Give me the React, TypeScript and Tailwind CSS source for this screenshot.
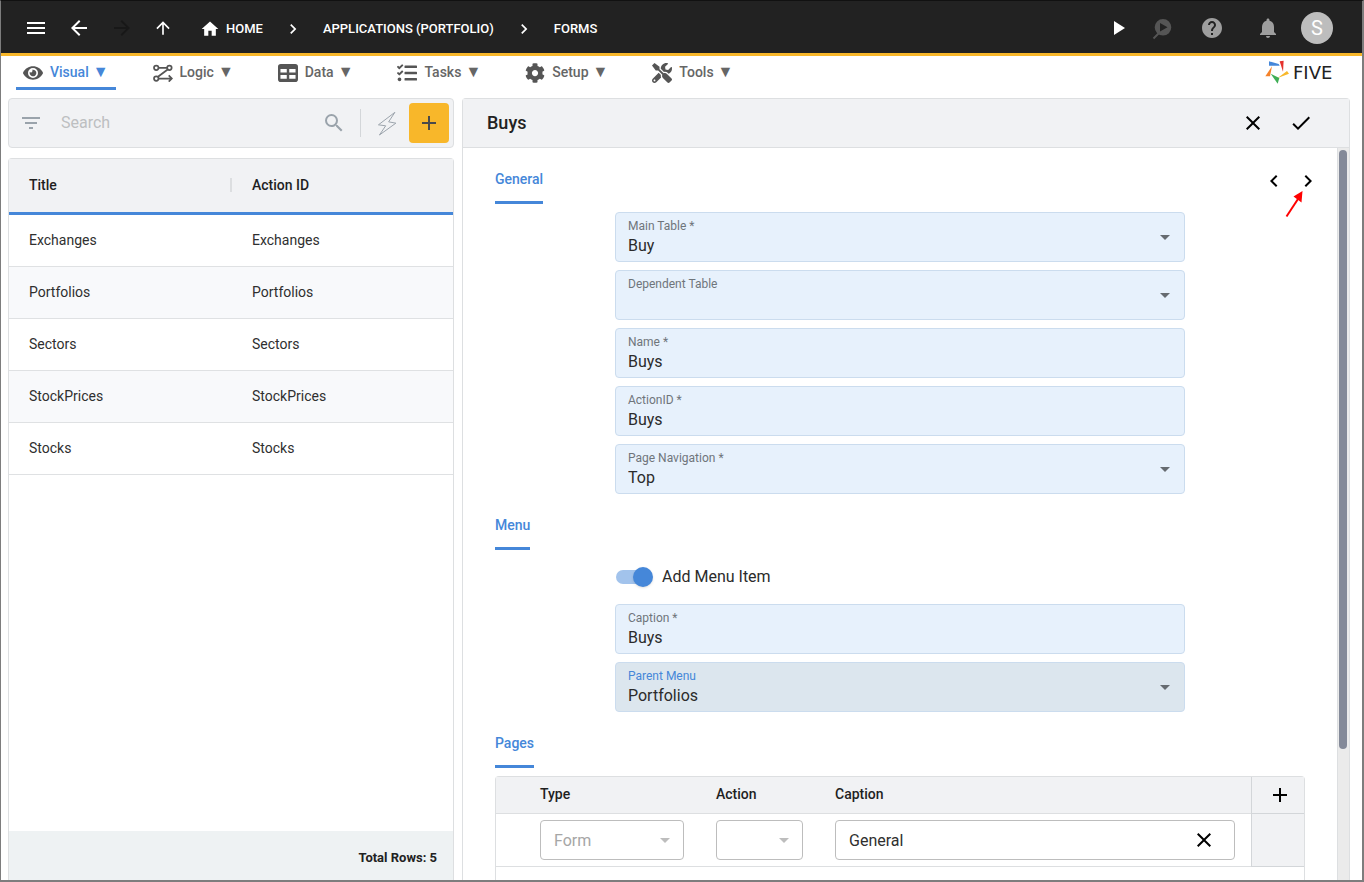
import React from 'react';
import {
  MdAdd,
  MdArrowBack,
  MdArrowDropDown,
  MdArrowForward,
  MdArrowUpward,
  MdCheck,
  MdChevronLeft,
  MdChevronRight,
  MdClose,
  MdFilterList,
  MdHelp,
  MdHome,
  MdMenu,
  MdNotifications,
  MdPlayArrow,
  MdSearch,
} from 'react-icons/md';
import { FaCog, FaEye, FaTasks, FaTools } from 'react-icons/fa';

interface FormAction {
  title: string;
  actionId: string;
}

interface FieldProps {
  id: string;
  label: string;
  value: string;
  select?: boolean;
  active?: boolean;
}

const forms: FormAction[] = [
  { title: 'Exchanges', actionId: 'Exchanges' },
  { title: 'Portfolios', actionId: 'Portfolios' },
  { title: 'Sectors', actionId: 'Sectors' },
  { title: 'StockPrices', actionId: 'StockPrices' },
  { title: 'Stocks', actionId: 'Stocks' },
];

const LogicIcon = () => (
  <svg viewBox="0 0 57 52" className="w-5 h-[18px]" fill="none" stroke="currentColor" strokeWidth="5">
    <circle cx="9" cy="11" r="6.5" />
    <circle cx="47" cy="11" r="6.5" />
    <circle cx="9" cy="42" r="6.5" />
    <path d="M16 11H40M42 16L14 37M16 42H53M45 33l9 9-9 9" />
  </svg>
);

const DataIcon = () => (
  <svg viewBox="0 0 57 51" className="w-5 h-[18px]" fill="currentColor" fillRule="evenodd">
    <path d="M8 0h41a8 8 0 0 1 8 8v35a8 8 0 0 1-8 8H8a8 8 0 0 1-8-8V8a8 8 0 0 1 8-8zM7 14v10h18V14zM32 14v10h18V14zM7 31v11h18V31zM32 31v11h18V31z" />
  </svg>
);

const InspectIcon = () => (
  <svg viewBox="0 0 24 24" className="size-6">
    <path d="M9 17L3.500 22.500" stroke="currentColor" strokeWidth="2" />
    <path
      fill="currentColor"
      fillRule="evenodd"
      d="M13 3a8.300 8.300 0 1 0 0 16.600A8.300 8.300 0 0 0 13 3zM10 7l7.500 4.300L10 15.600z"
    />
  </svg>
);

const BoltIcon = () => (
  <svg viewBox="0 0 60 76" className="w-5 h-[25px]" fill="none" stroke="currentColor" strokeWidth="3" strokeLinejoin="round">
    <path d="M54 4L4 42l22 3L7 73l50-36-22-4z" />
  </svg>
);

const FiveLogo = () => (
  <div className="flex items-center w-[87px] h-6">
    <svg viewBox="0 0 72 70" className="w-6 h-6 shrink-0">
      <path fill="#4587d9" d="M12 3l29 8 3 5H12z" />
      <path fill="#e5322d" d="M44 3l12-2-2 33z" />
      <path fill="#f8b72a" d="M38 53l28-21 6 8z" />
      <path fill="#3fae55" d="M17 40l26 13-5 17z" />
      <path fill="#f5822a" d="M21 18l-6 30H1z" />
    </svg>
    <span className="ml-1 pt-0.5 text-lg leading-6 text-[#222222] font-['DejaVu_Sans',sans-serif]">FIVE</span>
  </div>
);

const tabs = [
  { name: 'Visual', icon: <FaEye className="size-5" /> },
  { name: 'Logic', icon: <LogicIcon /> },
  { name: 'Data', icon: <DataIcon /> },
  { name: 'Tasks', icon: <FaTasks className="size-5" /> },
  { name: 'Setup', icon: <FaCog className="size-5" /> },
  { name: 'Tools', icon: <FaTools className="size-5" /> },
];

const Field: React.FC<FieldProps> = ({ id, label, value, select, active }) => (
  <div
    className={`relative h-[50px] rounded border border-[#cbdcee] px-3 pt-[5px] ${
      active ? 'bg-[#dce6ee]' : 'bg-[#e7f1fc]'
    }`}
  >
    <label htmlFor={id} className={`block text-xs leading-4 ${active ? 'text-[#4587d9]' : 'text-[#6f757b]'}`}>
      {label}
    </label>
    {select ? (
      <>
        <select
          id={id}
          defaultValue={value}
          className="block w-full h-6 appearance-none bg-transparent text-base leading-6 text-[#2b2b2b] outline-none"
        >
          <option value={value}>{value}</option>
        </select>
        <MdArrowDropDown className="absolute right-[7px] top-3 size-6 text-[#666b70] pointer-events-none" />
      </>
    ) : (
      <input
        id={id}
        defaultValue={value}
        className="block w-full h-6 bg-transparent text-base leading-6 text-[#2b2b2b] outline-none"
      />
    )}
  </div>
);

const SectionTitle: React.FC<{ children: React.ReactNode }> = ({ children }) => (
  <h3 className="w-fit border-b-3 border-[#4587d9] pb-3 text-sm leading-5 font-medium text-[#4587d9]">{children}</h3>
);

const TopBar = () => (
  <header className="flex shrink-0 items-center h-[55px] border-b-3 border-[#f8b72a] bg-[#222222] pt-0.5 pl-[23px] pr-[29px] text-white">
    <div className="flex items-center gap-[19px]">
      <button aria-label="Menu"><MdMenu className="size-6" /></button>
      <button aria-label="Back"><MdArrowBack className="size-6" /></button>
      <button aria-label="Forward" className="text-[#181818]"><MdArrowForward className="size-6" /></button>
      <button aria-label="Up"><MdArrowUpward className="size-5" /></button>
    </div>
    <nav className="flex items-center ml-[27px] pt-px text-[13px] leading-5 font-medium">
      <a href="#home" className="flex items-center gap-1.5"><MdHome className="size-5" />HOME</a>
      <MdChevronRight className="size-5 mx-5" />
      <a href="#applications">APPLICATIONS (PORTFOLIO)</a>
      <MdChevronRight className="size-5 mx-5" />
      <a href="#forms">FORMS</a>
    </nav>
    <div className="flex items-center ml-auto">
      <button aria-label="Run" className="flex justify-center w-10"><MdPlayArrow className="size-6" /></button>
      <button aria-label="Inspect" className="flex justify-center w-12 text-[#555555]"><InspectIcon /></button>
      <button aria-label="Help" className="flex justify-center w-[52px] text-[#9e9e9e]"><MdHelp className="size-6" /></button>
      <button aria-label="Notifications" className="flex justify-center w-[60px] text-[#9e9e9e]"><MdNotifications className="size-6" /></button>
      <button className="ml-[3px] size-8 rounded-full bg-[#bdbdbd] text-xl leading-8 text-white">S</button>
    </div>
  </header>
);

const NavTabs = () => (
  <div className="flex shrink-0 items-start justify-between h-[42px] pl-[15px] pr-[10px]">
    <nav className="flex gap-[30px]">
      {tabs.map((tab, index) => (
        <button
          key={tab.name}
          className={`flex items-center h-[34px] border-b-3 px-[7px] text-sm font-medium ${
            index === 0 ? 'border-[#4587d9] text-[#4587d9]' : 'border-transparent text-[#666666]'
          }`}
        >
          <span className="w-5 mt-0.5 text-[#555555]">{tab.icon}</span>
          <span className="ml-[7px] mr-1">{tab.name}</span>
          <span className="text-base leading-5">▼</span>
        </button>
      ))}
    </nav>
    <div className="pt-1">
      <FiveLogo />
    </div>
  </div>
);

const FormList = () => (
  <aside className="flex flex-col shrink-0 w-[446px] gap-2.5">
    <div className="flex items-center h-[50px] rounded border border-[#dddfe1] bg-[#f1f2f4] pl-2.5 pr-1 text-[#9aa3ab]">
      <button aria-label="Filter"><MdFilterList className="size-6" /></button>
      <input
        aria-label="Search"
        placeholder="Search"
        className="flex-1 min-w-0 ml-[18px] bg-transparent text-base text-[#2b2b2b] placeholder:text-[#bdbfc1] outline-none"
      />
      <button aria-label="Find"><MdSearch className="size-6" /></button>
      <span className="w-px h-7 ml-3.5 mr-4 bg-[#d3d6d9]" />
      <button aria-label="Quick actions"><BoltIcon /></button>
      <button aria-label="Add form" className="flex items-center justify-center size-10 ml-3 rounded bg-[#f8b72a] text-[#4a4a4a]">
        <MdAdd className="size-6" />
      </button>
    </div>
    <div className="flex flex-col flex-1 min-h-0 rounded-t border border-b-0 border-[#dddfe1]">
      <table className="w-full table-fixed border-separate border-spacing-0 text-left text-sm text-[#2f2f2f]">
        <colgroup>
          <col className="w-[223px]" />
          <col />
        </colgroup>
        <thead>
          <tr className="h-14">
            <th className="border-b-3 border-[#4587d9] bg-[#f1f2f4] pl-5 pb-0.5 font-medium text-[#1f1f1f]">
              <div className="flex items-center justify-between">
                Title
                <span className="w-0.5 h-3.5 bg-[#dcdee0]" />
              </div>
            </th>
            <th className="border-b-3 border-[#4587d9] bg-[#f1f2f4] pl-5 pb-0.5 font-medium text-[#1f1f1f]">Action ID</th>
          </tr>
        </thead>
        <tbody>
          {forms.map(form => (
            <tr key={form.title} className="h-[52px] even:bg-[#f8f9fb]">
              <td className="border-b border-[#dfe1e3] pl-5 pb-0.5">{form.title}</td>
              <td className="border-b border-[#dfe1e3] pl-5 pb-0.5">{form.actionId}</td>
            </tr>
          ))}
        </tbody>
      </table>
      <div className="flex items-center justify-end h-[49px] pt-1 mt-auto bg-[#eef2f3] pr-4 text-[13px] font-bold text-[#222222]">
        Total Rows: 5
      </div>
    </div>
  </aside>
);

const PagesTable = () => (
  <table className="w-full table-fixed border-separate border-spacing-0 border border-b-0 border-[#dddfe1] rounded-t text-left">
    <colgroup>
      <col className="w-[204px]" />
      <col className="w-[119px]" />
      <col />
      <col className="w-[53px]" />
    </colgroup>
    <thead className="bg-[#f1f2f4] text-sm text-[#1f1f1f]">
      <tr className="h-[37px]">
        <th className="border-b border-[#dddfe1] pl-11 pb-0.5 font-medium">Type</th>
        <th className="border-b border-[#dddfe1] pl-4 pb-0.5 font-medium">Action</th>
        <th className="border-b border-[#dddfe1] pl-4 pb-0.5 font-medium">Caption</th>
        <th className="border-b border-l border-[#d3d6d9] pl-1">
          <button aria-label="Add page" className="block mx-auto text-black"><MdAdd className="size-6" /></button>
        </th>
      </tr>
    </thead>
    <tbody>
      <tr className="h-[53px]">
        <td className="border-b border-[#dddfe1] pl-11 pr-4">
          <div className="relative">
            <select
              aria-label="Type"
              disabled
              className="block w-full h-10 appearance-none rounded border border-[#bdbdbd] pl-[13px] pt-px text-base text-[#a6a6a6] opacity-100"
            >
              <option>Form</option>
            </select>
            <MdArrowDropDown className="absolute right-[7px] top-2 size-6 text-[#bdbdbd]" />
          </div>
        </td>
        <td className="border-b border-[#dddfe1] px-4">
          <div className="relative">
            <select
              aria-label="Action"
              disabled
              className="block w-full h-10 appearance-none rounded border border-[#bdbdbd] opacity-100"
            >
              <option></option>
            </select>
            <MdArrowDropDown className="absolute right-[7px] top-2 size-6 text-[#bdbdbd]" />
          </div>
        </td>
        <td className="border-b border-[#dddfe1] px-4">
          <div className="flex items-center h-10 rounded border border-[#bdbdbd] pl-[13px] pr-[18px]">
            <input aria-label="Caption" defaultValue="General" className="flex-1 min-w-0 pt-0.5 text-base text-[#2f2f2f] outline-none" />
            <button aria-label="Clear caption" className="text-black"><MdClose className="size-6" /></button>
          </div>
        </td>
        <td className="border-b border-l border-[#d3d6d9] bg-[#f1f2f4]"></td>
      </tr>
      <tr className="h-[52px]">
        <td colSpan={4}></td>
      </tr>
    </tbody>
  </table>
);

const FormEditor = () => (
  <main className="flex flex-col flex-1 min-w-0 rounded-t border border-b-0 border-[#dddfe1]">
    <div className="flex shrink-0 items-center h-[49px] border-b border-[#dddfe1] bg-[#f1f2f4] pl-6 pr-9">
      <h2 className="mr-auto text-lg font-medium text-[#222222]">Buys</h2>
      <button aria-label="Cancel" className="text-black"><MdClose className="size-6" /></button>
      <button aria-label="Save" className="ml-6 text-black"><MdCheck className="size-6" /></button>
    </div>
    <div className="flex flex-1 min-h-0">
      <div className="flex-1 min-w-0 overflow-hidden px-8">
        <section className="pt-[21px]">
          <div className="relative flex items-start justify-between mb-2 -mr-[15px]">
            <SectionTitle>General</SectionTitle>
            <div className="flex gap-2.5 text-black">
              <button aria-label="Previous record"><MdChevronLeft className="size-6" /></button>
              <button aria-label="Next record"><MdChevronRight className="size-6" /></button>
            </div>
            <svg viewBox="0 0 20 28" className="absolute right-[15px] top-[21px] w-5 h-7">
              <path d="M1.500 26.500L13 9" stroke="#ff0000" strokeWidth="2" />
              <path d="M17.500 1L16.500 12.500 8.500 6.500z" fill="#ff0000" />
            </svg>
          </div>
          <div className="flex flex-col gap-2 max-w-[570px] mx-auto">
            <Field id="main-table" label="Main Table *" value="Buy" select />
            <Field id="dependent-table" label="Dependent Table" value="" select />
            <Field id="name" label="Name *" value="Buys" />
            <Field id="action-id" label="ActionID *" value="Buys" />
            <Field id="page-navigation" label="Page Navigation *" value="Top" select />
          </div>
        </section>
        <section className="pt-[21px]">
          <SectionTitle>Menu</SectionTitle>
          <div className="flex flex-col gap-2 max-w-[570px] mx-auto mt-2">
            <div className="flex items-center h-[38px] pl-px">
              <input
                id="add-menu-item"
                type="checkbox"
                role="switch"
                defaultChecked
                className="relative w-[34px] h-3.5 appearance-none rounded-full bg-[#a2c3ec] before:absolute before:-top-[3px] before:left-[17px] before:size-5 before:rounded-full before:bg-[#4587d9] before:shadow-sm"
              />
              <label htmlFor="add-menu-item" className="pl-3 text-base text-[#2b2b2b]">Add Menu Item</label>
            </div>
            <Field id="caption" label="Caption *" value="Buys" />
            <Field id="parent-menu" label="Parent Menu" value="Portfolios" select active />
          </div>
        </section>
        <section className="pt-[21px]">
          <div className="mb-2">
            <SectionTitle>Pages</SectionTitle>
          </div>
          <PagesTable />
        </section>
      </div>
      <div className="w-3 shrink-0 border-l border-[#dddfe1] bg-[#ebebeb] px-px pt-0.5">
        <div className="w-2 h-[82%] rounded-full bg-[#848a99]" />
      </div>
    </div>
  </main>
);

export default function App() {
  return (
    <div className="flex flex-col h-screen overflow-hidden border border-b-2 border-r-2 border-[#7d7d7d] border-t-[#111111] bg-white font-[Roboto,sans-serif]">
      <TopBar />
      <NavTabs />
      <div className="flex flex-1 min-h-0 gap-2 pl-[7px] pr-3">
        <FormList />
        <FormEditor />
      </div>
    </div>
  );
}
